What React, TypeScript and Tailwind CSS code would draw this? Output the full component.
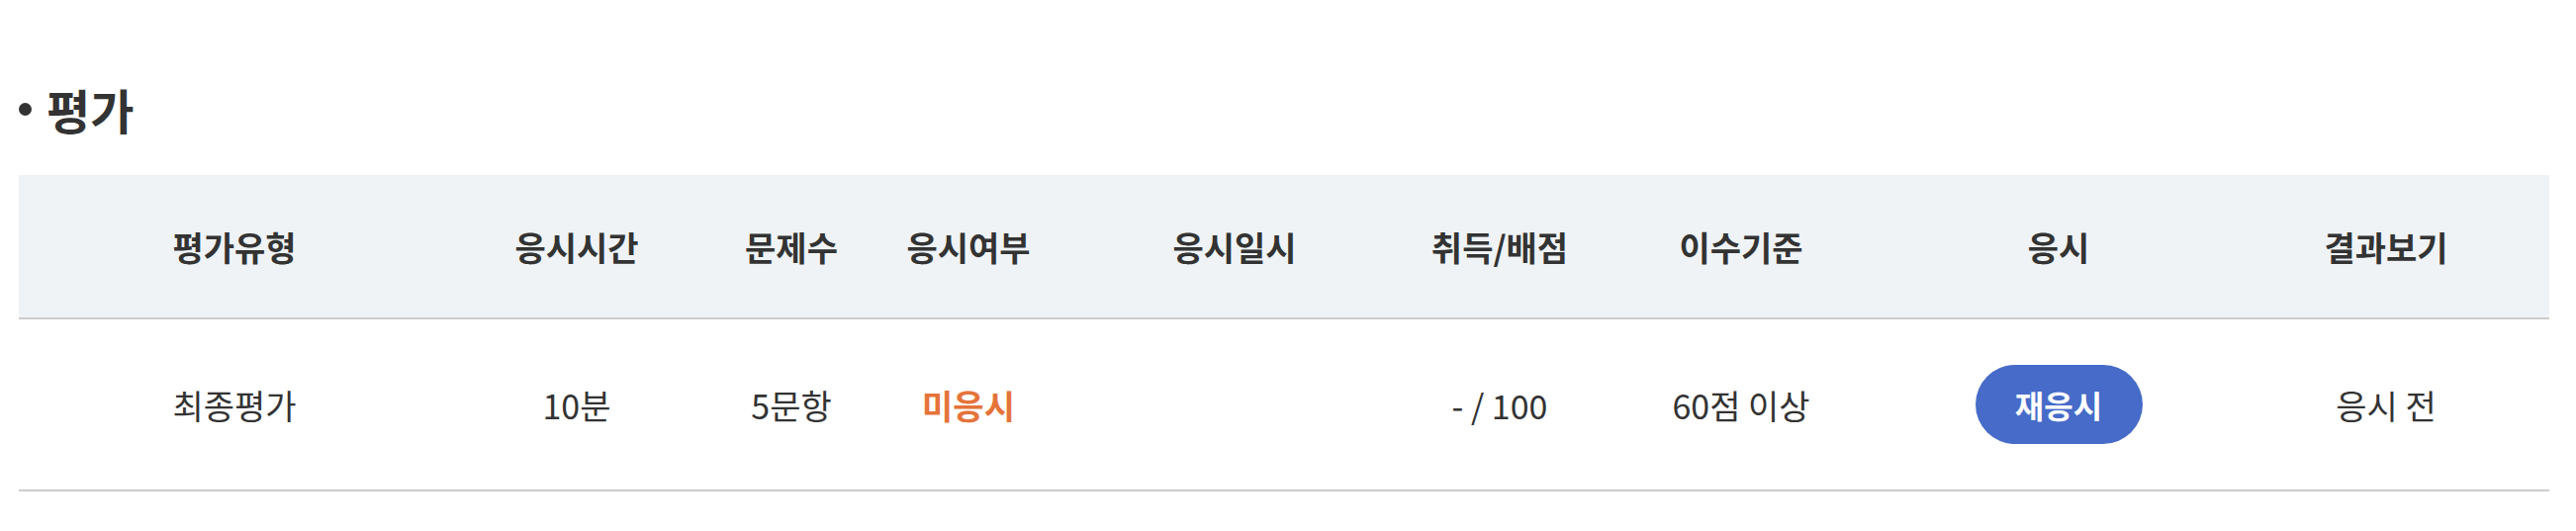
const cols = [
  { head: '평가유형', cell: '최종평가' },
  { head: '응시시간', cell: '10분' },
  { head: '문제수', cell: '5문항' },
  { head: '응시여부', cell: 'status' },
  { head: '응시일시', cell: '' },
  { head: '취득/배점', cell: '- / 100' },
  { head: '이수기준', cell: '60점 이상' },
  { head: '응시', cell: 'button' },
  { head: '결과보기', cell: '응시 전' },
];

function Cell({ value }: { value: string }) {
  if (value === 'status') {
    return <span className="font-bold text-[#e5733a]">미응시</span>;
  }
  if (value === 'button') {
    return (
      <button className="h-[80px] w-[169px] rounded-full bg-[#466bc8] text-[32px] font-bold text-white">
        재응시
      </button>
    );
  }
  return <span>{value}</span>;
}

export default function App() {
  return (
    <div className="min-h-[537px] bg-white pt-[80px] text-[#333] font-['Noto_Sans_CJK_KR','Noto_Sans',sans-serif]">
      <h2 className="flex items-center gap-[15px] pl-[19px] text-[48px] font-bold leading-[60px]">
        <span className="h-[13px] w-[13px] rounded-full bg-[#333]" />
        평가
      </h2>
      <div className="mt-[37px] ml-[19px] w-[2558px]">
        <div className="grid h-[146px] grid-cols-[436px_256px_178px_180px_358px_178px_310px_332px_330px] border-b-2 border-[#cccccc] bg-[#eff3f6] text-[34px] font-bold">
          {cols.map((c) => (
            <div key={c.head} className="flex items-center justify-center">
              {c.head}
            </div>
          ))}
        </div>
        <div className="grid h-[174px] grid-cols-[436px_256px_178px_180px_358px_178px_310px_332px_330px] border-b-2 border-[#cccccc] text-[34px]">
          {cols.map((c) => (
            <div key={c.head} className="flex items-center justify-center">
              <Cell value={c.cell} />
            </div>
          ))}
        </div>
      </div>
    </div>
  );
}
